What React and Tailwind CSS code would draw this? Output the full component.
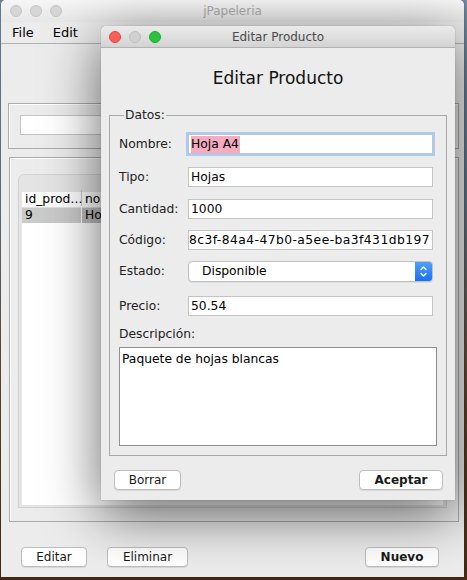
import React from "react";

const FONT = { fontFamily: '"DejaVu Sans", "Liberation Sans", sans-serif' };

const Light = ({ color }) => (
  <span className={`block w-[12px] h-[12px] rounded-full border ${color}`} />
);

const Btn = ({ children, bold, className = "" }) => (
  <div
    className={`h-[20px] flex items-center justify-center bg-white border border-[#bdbdbd] rounded-[4px] shadow-[0_1px_0_rgba(0,0,0,0.08)] text-[12px] text-[#1a1a1a] ${bold ? "font-bold" : ""} ${className}`}
  >
    {children}
  </div>
);

const Field = ({ label, children, className = "" }) => (
  <div className={`flex items-center ${className}`}>
    <span className="w-[69px] text-[12.3px] text-[#222]">{label}</span>
    {children}
  </div>
);

const TextBox = ({ children, className = "" }) => (
  <div
    className={`w-[245px] h-[20px] bg-white border border-[#c4c4c4] flex items-center px-[2px] text-[12.3px] text-black whitespace-nowrap overflow-hidden ${className}`}
  >
    {children}
  </div>
);

export default function App() {
  return (
    <div
      className="relative w-[467px] h-[580px] overflow-hidden bg-[linear-gradient(180deg,#7e92ab_0%,#6f7f8f_35%,#6a4a30_70%,#4e2e18_100%)]"
      style={FONT}
    >
      {/* main window */}
      <div className="absolute left-[1px] top-0 w-[463px] h-[577px] rounded-t-[5px] bg-[#ececec] flex flex-col shadow-[0_0_6px_rgba(0,0,0,0.4)]">
        <div className="relative h-[22px] rounded-t-[5px] bg-[linear-gradient(180deg,#f6f6f6,#e7e7e7)] flex items-center">
          <div className="flex gap-[8px] pl-[9px]">
            <Light color="bg-[#d6d6d6] border-[#c6c6c6]" />
            <Light color="bg-[#d6d6d6] border-[#c6c6c6]" />
            <Light color="bg-[#d6d6d6] border-[#c6c6c6]" />
          </div>
          <span className="absolute inset-x-0 text-center text-[12px] text-[#ababab]">jPapeleria</span>
        </div>
        <div className="h-[22px] border-b border-[#b3b3b3] flex items-center text-[13px] text-black">
          <span className="ml-[11px]">File</span>
          <span className="ml-[19px]">Edit</span>
        </div>

        {/* search panel */}
        <div className="mt-[59px] ml-[7px] mr-[5px] h-[46px] border border-[#ababab] shadow-[inset_1px_1px_0_#fff] pt-[11px] pl-[11px]">
          <div className="w-[420px] h-[20px] bg-white border border-[#c4c4c4]" />
        </div>

        {/* table panel */}
        <div className="mt-[8px] ml-[8px] mr-[5px] h-[365px] border border-[#ababab] shadow-[inset_1px_1px_0_#fff] pt-[16px] pl-[8px] pr-[11px]">
          <div className="h-[334px] rounded-t-[6px] border border-[#d2d2d2] bg-[#e4e4e4] pt-[17px] px-[3px]">
            <div className="h-[313px] bg-white text-[12.3px] text-black">
              <div className="flex h-[16px] items-center border-b border-[#e0e0e0]">
                <span className="w-[60px] pl-[3px] border-r border-[#c8c8c8]">id_prod…</span>
                <span className="pl-[3px] w-[80px] overflow-hidden">nombre</span>
              </div>
              <div className="flex h-[15px] items-center bg-[#cacaca]">
                <span className="w-[60px] pl-[3px] border-r border-white">9</span>
                <span className="pl-[3px] flex-1 bg-[#bdbdbd] h-full flex items-center">Hoja A4</span>
              </div>
            </div>
          </div>
        </div>

        <div className="mt-[25px] flex pl-[20px] pr-[25px]">
          <Btn className="w-[66px]">Editar</Btn>
          <Btn className="w-[81px] ml-[20px]">Eliminar</Btn>
          <Btn bold className="w-[74px] ml-auto">Nuevo</Btn>
        </div>
      </div>

      {/* dialog */}
      <div className="absolute left-[101px] top-[26px] w-[354px] h-[474px] rounded-t-[5px] bg-[#ececec] flex flex-col shadow-[0_14px_55px_rgba(0,0,0,0.6),0_0_1px_rgba(0,0,0,0.5)]">
        <div className="relative h-[22px] rounded-t-[5px] bg-[linear-gradient(180deg,#ebebeb,#d3d3d3)] border-b border-[#b1b1b1] flex items-center">
          <div className="flex gap-[8px] pl-[8px]">
            <Light color="bg-[#fc5f57] border-[#e0443e]" />
            <Light color="bg-[#d0d0d0] border-[#bdbdbd]" />
            <Light color="bg-[#29c340] border-[#1aab29]" />
          </div>
          <span className="absolute inset-x-0 text-center text-[12px] text-[#4a4a4a]">Editar Producto</span>
        </div>

        <div className="text-center text-[17px] text-[#111] mt-[19px] leading-[22px]">Editar Producto</div>

        <fieldset className="mt-[18px] mx-[8px] w-[338px] h-[349px] border border-[#a8a8a8] pl-[9px] pt-[11px]">
          <legend className="ml-[5px] px-[1px] text-[12.3px] leading-[16px] text-[#222]">Datos:</legend>

          <Field label="Nombre:">
            <TextBox className="border-[#8fb8f2] shadow-[0_0_0_2px_#a9cbf6]">
              <span className="bg-[#f5abc1] h-[17px] flex items-center pr-[1px]">Hoja A4</span>
            </TextBox>
          </Field>
          <Field label="Tipo:" className="mt-[13px]">
            <TextBox>Hojas</TextBox>
          </Field>
          <Field label="Cantidad:" className="mt-[12px]">
            <TextBox>1000</TextBox>
          </Field>
          <Field label="Código:" className="mt-[11px]">
            <TextBox className="justify-end tracking-[0.45px]">8c3f-84a4-47b0-a5ee-ba3f431db197</TextBox>
          </Field>
          <Field label="Estado:" className="mt-[11px]">
            <div className="w-[245px] h-[21px] flex rounded-[4px] border border-[#c0c0c0] bg-white shadow-[0_1px_0_rgba(0,0,0,0.06)] overflow-hidden">
              <span className="flex-1 flex items-center pl-[13px] text-[12.3px] text-black">Disponible</span>
              <span className="w-[17px] h-full bg-[linear-gradient(180deg,#4fa0fb,#1a6ff2)] flex items-center justify-center">
                <svg width="9" height="13" viewBox="0 0 9 13" fill="none" stroke="#fff" strokeWidth="1.4" strokeLinecap="round" strokeLinejoin="round">
                  <path d="M2 4.5 L4.5 2 L7 4.5" />
                  <path d="M2 8.5 L4.5 11 L7 8.5" />
                </svg>
              </span>
            </div>
          </Field>
          <Field label="Precio:" className="mt-[14px]">
            <TextBox className="h-[19px]">50.54</TextBox>
          </Field>

          <div className="mt-[10px] text-[12.3px] text-[#222] leading-[16px]">Descripción:</div>
          <div className="mt-[5px] w-[318px] h-[99px] bg-white border border-[#8f8f8f] px-[2px] pt-[2px] text-[12.3px] text-black">
            Paquete de hojas blancas
          </div>
        </fieldset>

        <div className="mt-[14px] flex pl-[13px] pr-[12px]">
          <Btn className="w-[67px]">Borrar</Btn>
          <Btn bold className="w-[84px] ml-auto">Aceptar</Btn>
        </div>
      </div>
    </div>
  );
}
